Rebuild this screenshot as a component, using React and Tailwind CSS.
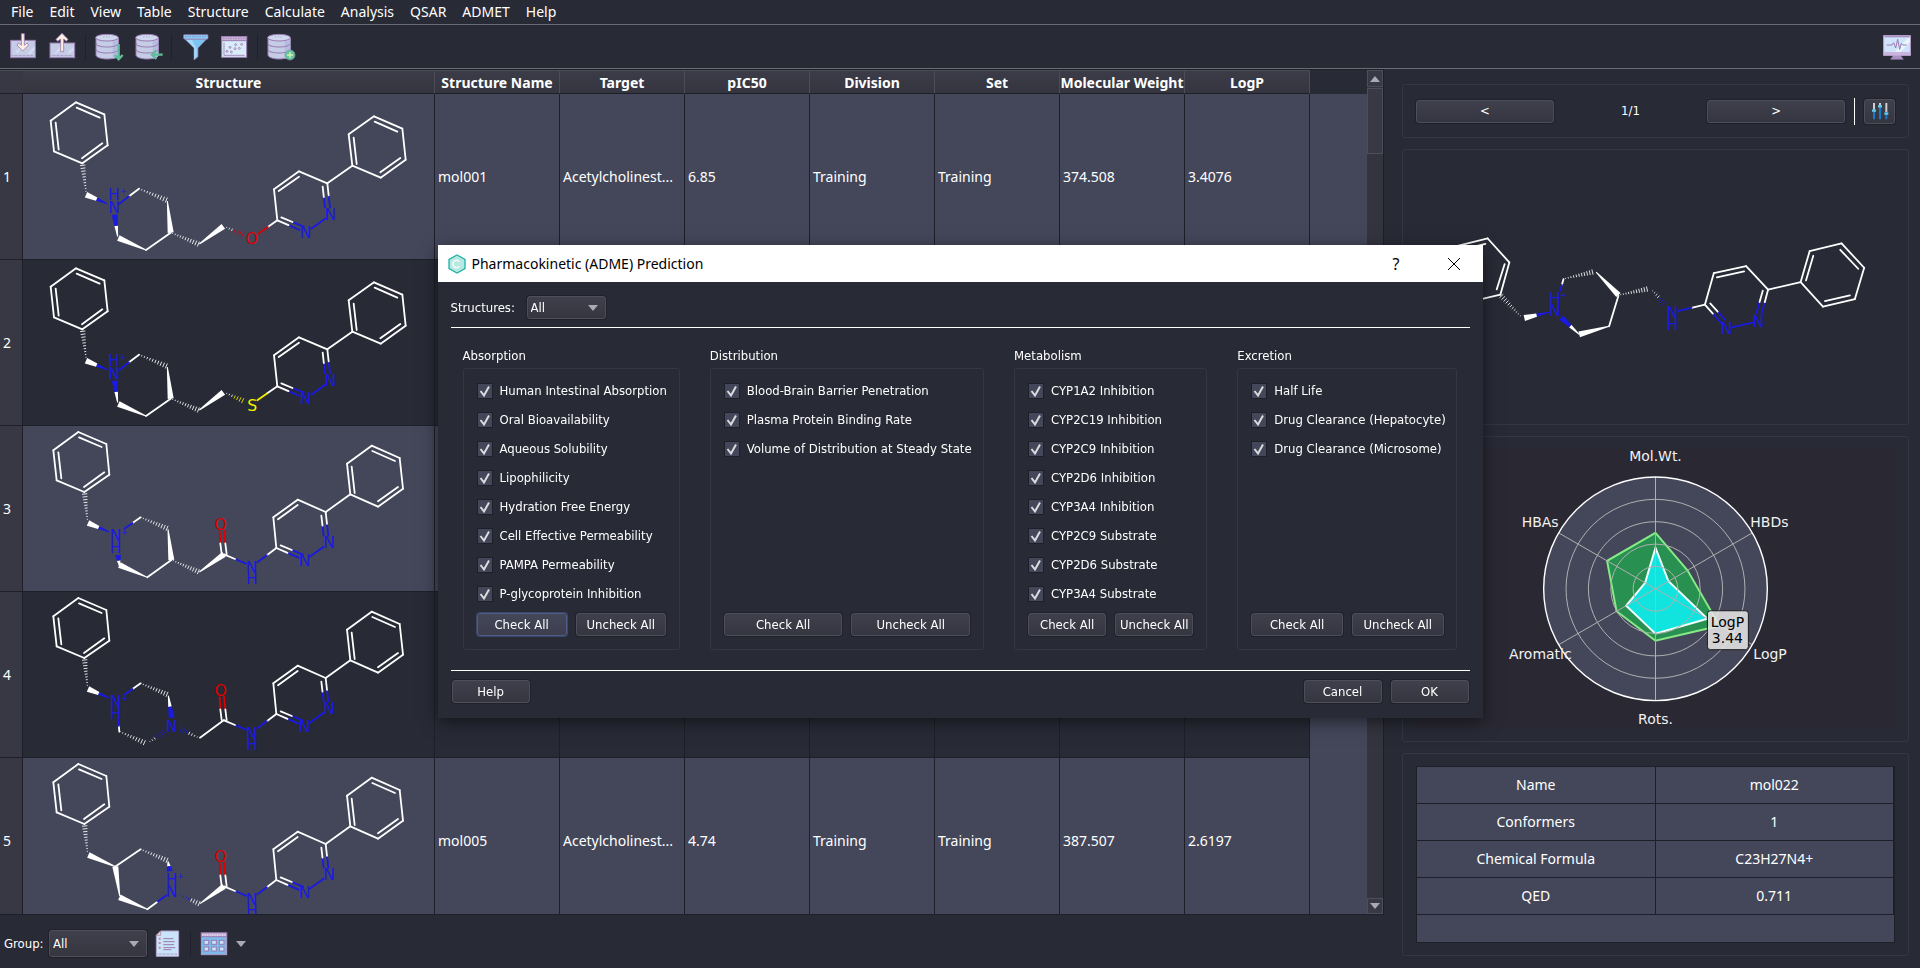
import { useState } from "react";
import clsx from "clsx";

const MENUS = ["File", "Edit", "View", "Table", "Structure", "Calculate", "Analysis", "QSAR", "ADMET", "Help"];

const COLUMNS = ["Structure Name", "Target", "pIC50", "Division", "Set", "Molecular Weight", "LogP"];

const ROWS = [
  ["mol001", "Acetylcholinest...", "6.85", "Training", "Training", "374.508", "3.4076"],
  [],
  [],
  [],
  ["mol005", "Acetylcholinest...", "4.74", "Training", "Training", "387.507", "2.6197"],
];

const DETAILS = [
  ["Name", "mol022"],
  ["Conformers", "1"],
  ["Chemical Formula", "C23H27N4+"],
  ["QED", "0.711"],
];

const GROUPS = [
  {
    title: "Absorption",
    items: [
      "Human Intestinal Absorption",
      "Oral Bioavailability",
      "Aqueous Solubility",
      "Lipophilicity",
      "Hydration Free Energy",
      "Cell Effective Permeability",
      "PAMPA Permeability",
      "P-glycoprotein Inhibition",
    ],
  },
  {
    title: "Distribution",
    items: [
      "Blood-Brain Barrier Penetration",
      "Plasma Protein Binding Rate",
      "Volume of Distribution at Steady State",
    ],
  },
  {
    title: "Metabolism",
    items: [
      "CYP1A2 Inhibition",
      "CYP2C19 Inhibition",
      "CYP2C9 Inhibition",
      "CYP2D6 Inhibition",
      "CYP3A4 Inhibition",
      "CYP2C9 Substrate",
      "CYP2D6 Substrate",
      "CYP3A4 Substrate",
    ],
  },
  {
    title: "Excretion",
    items: ["Half Life", "Drug Clearance (Hepatocyte)", "Drug Clearance (Microsome)"],
  },
];

/* ---------- molecule drawing ---------- */

const W = "#ffffff";
const N = "#1a1ae0";
const O = "#dc0000";
const S = "#f2f200";

// bond: ["l" | "w" | "h", x1, y1, x2, y2, colour, colour2, split]
// wedges and hashes start at their narrow end
function Bond({ bond }) {
  const [kind, x1, y1, x2, y2, c1 = W, c2 = c1, split = 0.5] = bond;
  const at = (t) => [x1 + (x2 - x1) * t, y1 + (y2 - y1) * t];
  const len = Math.hypot(x2 - x1, y2 - y1);
  const nx = -(y2 - y1) / len;
  const ny = (x2 - x1) / len;

  if (kind === "l") {
    const [mx, my] = at(c1 === c2 ? 1 : split);
    return (
      <g strokeWidth="5.4" strokeLinecap="round">
        {c1 !== c2 && <line x1={mx} y1={my} x2={x2} y2={y2} stroke={c2} />}
        <line x1={x1} y1={y1} x2={mx} y2={my} stroke={c1} />
      </g>
    );
  }

  if (kind === "w") {
    const quad = (a, b) => {
      const [ax, ay] = at(a);
      const [bx, by] = at(b);
      const wa = 1.5 + 7.5 * a;
      const wb = 1.5 + 7.5 * b;
      return [
        [ax + nx * wa, ay + ny * wa],
        [bx + nx * wb, by + ny * wb],
        [bx - nx * wb, by - ny * wb],
        [ax - nx * wa, ay - ny * wa],
      ].join(" ");
    };
    if (c1 === c2) return <polygon points={quad(0, 1)} fill={c1} />;
    return (
      <g>
        <polygon points={quad(0, split)} fill={c1} />
        <polygon points={quad(split, 1)} fill={c2} />
      </g>
    );
  }

  const count = Math.max(5, Math.round(len / 8.5));
  return (
    <g strokeWidth="2.6">
      {Array.from({ length: count + 1 }, (_, i) => {
        const t = i / count;
        const [x, y] = at(t);
        const w = 1.5 + 6.5 * t;
        return (
          <line key={i} x1={x + nx * w} y1={y + ny * w} x2={x - nx * w} y2={y - ny * w} stroke={t > split ? c2 : c1} />
        );
      })}
    </g>
  );
}

function Molecule({ bonds, atoms, viewBox, className, label }) {
  return (
    <svg viewBox={viewBox} className={className} role="img" aria-label={label}>
      {bonds.map((bond, i) => (
        <Bond key={i} bond={bond} />
      ))}
      {atoms.map(([text, x, y, fill, size = 47], i) => (
        <text
          key={i}
          x={x}
          y={y + size * 0.36}
          fill={fill}
          fontSize={size}
          textAnchor="middle"
          className="font-['DejaVu_Sans',sans-serif]"
        >
          {text}
        </text>
      ))}
    </svg>
  );
}

const ring = (pts) => pts.map(([x, y], i) => {
  const [nx, ny] = pts[(i + 1) % pts.length];
  return ["l", x, y, nx, ny];
});

const ETHER_BONDS = [
  ...ring([[228, 37], [313, 73], [323, 166], [247, 220], [162, 184], [152, 92]]),
  ["l", 230, 53, 299, 83],
  ["l", 307, 160, 246, 205],
  ["l", 176, 179, 167, 98],
  ["h", 258, 304, 248, 226],
  ["w", 322, 341, 258, 314, N, W],
  ["l", 357, 342, 417, 296, N, W],
  ["h", 417, 296, 499, 330],
  ["w", 502, 333, 512, 428],
  ["l", 512, 428, 438, 480],
  ["w", 438, 480, 355, 444],
  ["w", 353, 440, 344, 374, W, N],
  ["h", 518, 430, 595, 462],
  ["w", 598, 462, 670, 409],
  ["l", 832, 391, 822, 298],
  ["l", 822, 298, 897, 244],
  ["l", 836, 303, 897, 260],
  ["l", 897, 244, 982, 280],
  ["l", 982, 280, 990, 352, W, N],
  ["l", 968, 290, 975, 352, W, N],
  ["l", 832, 391, 899, 420, W, N],
  ["l", 844, 382, 911, 410, W, N],
  ["l", 975, 386, 934, 416, N],
  ["l", 982, 280, 1057, 227],
  ...ring([[1057, 227], [1046, 133], [1122, 79], [1207, 116], [1217, 209], [1142, 263]]),
  ["l", 1070, 222, 1061, 143],
  ["l", 1124, 95, 1192, 125],
  ["l", 1201, 204, 1141, 247],
];

const ETHER_ATOMS = [
  ["N", 342, 352, N],
  ["H", 342, 314, N],
  ["+", 370, 303, N, 26],
  ["N", 991, 374, N],
  ["N", 917, 428, N],
];

const AMIDE_BONDS = [
  ...ring([[235, 36], [319, 72], [328, 164], [253, 216], [170, 181], [160, 91]]),
  ["l", 237, 52, 305, 81],
  ["l", 313, 157, 252, 201],
  ["l", 184, 175, 175, 97],
  ["h", 262, 298, 254, 222],
  ["h", 422, 292, 501, 325],
  ["l", 661, 370, 659, 334, O],
  ["l", 661, 370, 665, 402],
  ["l", 676, 370, 672, 332, O],
  ["l", 676, 370, 680, 402],
  ["l", 672, 403, 738, 431, W, N],
  ["l", 772, 427, 829, 384, N, W],
  ["l", 829, 384, 820, 292],
  ["l", 820, 292, 893, 239],
  ["l", 834, 298, 893, 255],
  ["l", 893, 239, 977, 276],
  ["l", 977, 276, 985, 347, W, N],
  ["l", 964, 287, 971, 347, W, N],
  ["l", 829, 384, 896, 413, W, N],
  ["l", 842, 376, 909, 404, W, N],
  ["l", 971, 380, 929, 410, N],
  ["l", 977, 276, 1051, 223],
  ...ring([[1051, 223], [1041, 131], [1115, 77], [1199, 114], [1209, 206], [1134, 260]]),
  ["l", 1064, 219, 1055, 140],
  ["l", 1117, 93, 1185, 123],
  ["l", 1194, 201, 1134, 244],
];

const AMIDE_ATOMS = [
  ["O", 662, 312, O],
  ["N", 755, 441, N],
  ["H", 756, 476, N],
  ["N", 987, 368, N],
  ["N", 914, 421, N],
];

const MOLECULES = [
  {
    viewBox: "69 12 1233 495",
    bonds: [
      ...ETHER_BONDS,
      ["h", 680, 412, 728, 434, W, O, 0.4],
      ["l", 775, 431, 832, 391, O, W],
    ],
    atoms: [...ETHER_ATOMS, ["O", 756, 446, O]],
  },
  {
    viewBox: "69 12 1233 495",
    bonds: [
      ...ETHER_BONDS,
      ["h", 680, 412, 728, 434, W, S, 0.4],
      ["l", 772, 433, 832, 391, S, W],
    ],
    atoms: [...ETHER_ATOMS, ["S", 757, 447, S]],
  },
  {
    viewBox: "69 18 1233 495",
    bonds: [
      ...AMIDE_BONDS,
      ["w", 328, 336, 264, 309, N, W],
      ["l", 373, 326, 422, 292, N, W],
      ["w", 504, 328, 514, 420],
      ["l", 514, 420, 442, 472],
      ["w", 442, 472, 358, 435],
      ["w", 358, 438, 354, 405, W, N],
      ["h", 520, 422, 595, 455],
      ["w", 598, 456, 672, 403],
    ],
    atoms: [...AMIDE_ATOMS, ["N", 347, 347, N], ["H", 347, 383, N], ["+", 374, 336, N, 26]],
  },
  {
    viewBox: "69 18 1233 495",
    bonds: [
      ...AMIDE_BONDS,
      ["w", 328, 336, 264, 309, N, W],
      ["l", 373, 326, 422, 292, N, W],
      ["w", 505, 329, 515, 395, W, N],
      ["l", 355, 402, 358, 437, N, W],
      ["h", 360, 437, 433, 470],
      ["h", 450, 467, 492, 438, W, N, 0.4],
      ["h", 592, 453, 543, 431, W, N],
      ["l", 600, 455, 672, 402],
    ],
    atoms: [...AMIDE_ATOMS, ["N", 347, 347, N], ["H", 347, 383, N], ["+", 374, 336, N, 26], ["N", 515, 420, N]],
  },
  {
    viewBox: "69 18 1233 495",
    bonds: [
      ...AMIDE_BONDS,
      ["w", 347, 344, 265, 309],
      ["l", 345, 344, 422, 292],
      ["w", 359, 432, 346, 344],
      ["w", 442, 472, 358, 436],
      ["l", 442, 472, 499, 430, W, N],
      ["w", 504, 328, 509, 358, W, N],
      ["h", 543, 430, 597, 455, N, W],
      ["w", 600, 455, 672, 403],
    ],
    atoms: [...AMIDE_ATOMS, ["N", 515, 419, N], ["H", 515, 381, N], ["+", 541, 372, N, 26]],
  },
];

const PREVIEW = {
  bonds: [
    ...ring([[322, 533], [387, 605], [360, 702], [264, 724], [199, 655], [225, 557]]),
    ["l", 315, 549, 238, 568],
    ["l", 373, 610, 349, 686],
    ["h", 420, 766, 363, 706],
    ["w", 506, 755, 432, 772, N, W],
    ["l", 540, 690, 550, 655, N, W],
    ["h", 556, 653, 637, 634],
    ["w", 648, 634, 715, 703],
    ["l", 715, 705, 687, 797],
    ["w", 687, 797, 597, 821],
    ["w", 597, 821, 543, 771, W, N],
    ["h", 722, 702, 801, 685],
    ["h", 818, 690, 852, 727, W, N],
    ["l", 895, 751, 975, 732, N, W],
    ["l", 975, 732, 1002, 637],
    ["l", 1002, 637, 1099, 616],
    ["l", 1011, 650, 1093, 632],
    ["l", 1099, 616, 1165, 687],
    ["l", 975, 732, 1023, 786, W, N],
    ["l", 991, 728, 1036, 778, W, N],
    ["l", 1165, 687, 1145, 762, W, N],
    ["l", 1149, 690, 1130, 758, W, N],
    ["l", 1121, 785, 1056, 800, N],
    ["l", 1165, 687, 1263, 664],
    ...ring([[1263, 664], [1290, 571], [1386, 548], [1454, 621], [1426, 715], [1330, 738]]),
    ["l", 1279, 659, 1301, 585],
    ["l", 1382, 567, 1436, 624],
    ["l", 1411, 704, 1336, 721],
  ],
  atoms: [
    ["N", 524, 750, N],
    ["H", 524, 713, N],
    ["+", 551, 703, N, 26],
    ["N", 877, 754, N],
    ["H", 877, 792, N],
    ["N", 1136, 782, N],
    ["N", 1040, 804, N],
  ],
};

/* ---------- icons ---------- */

const OUTLINE = "#9a7bb0";
const FILL = "#c4cce6";

function Icon({ children }) {
  return (
    <svg viewBox="0 0 90 90" className="size-[30px]" fill="none" strokeWidth="3" stroke={OUTLINE} aria-hidden="true">
      {children}
    </svg>
  );
}

function Cylinder({ x = 0 }) {
  return (
    <g transform={`translate(${x} 0)`}>
      <path d="M6 17v52c0 7 15 12 33 12s34-5 34-12V17" fill={FILL} />
      <path d="M56 28c10-1 17-5 17-10v52c0 5-7 9-17 10z" fill="#b3bce0" stroke="none" />
      <ellipse cx="39" cy="17" rx="34" ry="10" fill="#cfd8ee" />
      <path d="M6 34c0 7 15 11 33 11s34-4 34-11M6 52c0 7 15 11 33 11s34-4 34-11" />
      <path d="M28 15h3M36 14h3M44 15h3M14 40v3M22 42v3M14 58v3M22 60v3" strokeWidth="2" />
    </g>
  );
}

const ImportIcon = () => (
  <Icon>
    <rect x="8" y="25" width="74" height="52" fill={FILL} />
    <path d="M20 62 50 28h10L28 64zM58 66l22-24v10L68 66z" fill="#d5dbf0" stroke="none" />
    <path d="M13 71h64" strokeDasharray="2 2" />
    <path d="M40 5h9v35l8-7 5 6-18 18-17-18 5-6 8 7z" fill="#fdeee2" strokeWidth="2.5" />
  </Icon>
);

const ExportIcon = () => (
  <Icon>
    <rect x="9" y="33" width="74" height="44" fill={FILL} />
    <path d="M22 64 48 36h10L30 64zM60 64l20-20v10L70 64z" fill="#d5dbf0" stroke="none" />
    <path d="M14 71h64" strokeDasharray="2 2" />
    <path d="M41 59h9V21l8 7 5-6L45 4 27 22l5 6 9-7z" fill="#fdeee2" strokeWidth="2.5" />
  </Icon>
);

const DatabaseDownIcon = () => (
  <Icon>
    <Cylinder />
    <path d="M74 36v45M62 69l12 13 12-13" stroke="#5fbd9a" strokeWidth="7" />
  </Icon>
);

const DatabaseLeftIcon = () => (
  <Icon>
    <Cylinder x={3} />
    <path d="M89 68H58M70 55 57 68l13 13" stroke="#5fbd9a" strokeWidth="7" />
  </Icon>
);

const FunnelIcon = () => (
  <Icon>
    <path d="M14 21h66L54 48v26l-12 10V48z" fill="#7cc4f2" strokeWidth="2" />
    <path d="M20 24h16l14 26v24l-7 8V48z" fill="#a4dbfa" stroke="none" />
    <rect x="11" y="8" width="73" height="13" rx="2" fill="#8fc9f4" strokeWidth="2" />
    <path d="M16 14h62" stroke="#6f8fd0" strokeDasharray="2 3" strokeWidth="4" />
  </Icon>
);

const ScatterIcon = () => (
  <Icon>
    <rect x="8" y="14" width="75" height="62" fill="#d9ecfa" />
    <rect x="8" y="14" width="75" height="12" fill="#cdb6dc" />
    <path d="M12 20h68" strokeDasharray="2 3" strokeWidth="4" />
    <path d="M15 32v38h62" strokeWidth="2.5" />
    <g strokeWidth="2.5">
      <circle cx="24" cy="58" r="3" />
      <circle cx="33" cy="46" r="3" />
      <circle cx="37" cy="60" r="3" />
      <circle cx="48" cy="50" r="3" />
      <circle cx="50" cy="38" r="3" />
      <circle cx="61" cy="49" r="3" />
      <circle cx="68" cy="37" r="3" />
    </g>
  </Icon>
);

const DatabaseAddIcon = () => (
  <Icon>
    <Cylinder />
    <circle cx="72" cy="69" r="15" fill="#62c3a0" stroke="#8d8fae" strokeWidth="2" />
    <path d="M72 60v18M63 69h18" stroke="#d6f5a8" strokeWidth="4" />
  </Icon>
);

const MonitorIcon = () => (
  <Icon>
    <path d="M36 68h18l10 14H26z" fill="#a893c4" strokeWidth="2" />
    <rect x="5" y="11" width="80" height="59" fill="#cfe4fa" stroke="#c3a5d6" />
    <path d="M38 60 78 18h6v12L56 60z" fill="#e8f4fe" stroke="none" />
    <rect x="5" y="60" width="80" height="9" fill="#c9b3df" stroke="none" />
    <path d="M7 14h76" stroke="#a78fc0" strokeWidth="4" />
    <path d="M14 39h16l5-7 6 16 6-26 6 30 5-18 4 5h12" />
  </Icon>
);

const ReportIcon = () => (
  <Icon>
    <path d="M26 6h54v76H13V19z" fill="#c9e4f8" stroke="#b5a2cc" />
    <path d="M26 6v13H13z" fill="#f7d9a0" strokeWidth="2" />
    <g strokeWidth="3">
      <path d="M34 29h30M34 38h34M34 47h32M34 56h36M34 62h24" />
      <path d="M20 29h6M20 42h6M20 56h6" stroke="#c58a9c" strokeWidth="6" />
    </g>
    <path d="M17 75h60" strokeDasharray="2 2" />
  </Icon>
);

const GridIcon = () => (
  <Icon>
    <rect x="7" y="12" width="76" height="65" fill="#7db9ea" stroke="#b09cca" />
    <rect x="7" y="12" width="76" height="11" fill="#e2d3ec" />
    <path d="M12 18h68" strokeDasharray="2 3" strokeWidth="3" />
    <g fill="#c9e4fa">
      <rect x="15" y="34" width="14" height="12" />
      <rect x="38" y="34" width="14" height="12" />
      <rect x="61" y="34" width="14" height="12" />
      <rect x="15" y="54" width="14" height="12" />
      <rect x="38" y="54" width="14" height="12" />
      <rect x="61" y="54" width="14" height="12" />
    </g>
  </Icon>
);

const SlidersIcon = () => (
  <svg viewBox="0 0 54 54" className="size-[18px]" strokeWidth="6" aria-hidden="true">
    <path d="M9 3v20M27 3v8M46 3v28" stroke="#cfcfd2" />
    <path d="M9 23v29M27 11v41M46 31v21" stroke="#1c7ac4" />
    <path d="M3 26h12M21 13h12M40 35h12" stroke="#62cbe9" strokeWidth="7" />
  </svg>
);

const LogoIcon = () => (
  <svg viewBox="0 0 60 60" className="size-5" aria-hidden="true">
    <polygon points="30,3 54,16 54,44 30,57 6,44 6,16" fill="#b8e8e2" stroke="#22b3a6" strokeWidth="4" />
    <path d="M37 23a11 11 0 1 0 0 14" fill="none" stroke="#f2fffd" strokeWidth="4" />
  </svg>
);

function Triangle({ className, up }) {
  return (
    <svg viewBox="0 0 10 6" className={clsx("h-[6px] w-[10px] fill-[#a9aab2]", className)} aria-hidden="true">
      <path d={up ? "M0 6 5 0l5 6z" : "M0 0h10L5 6z"} />
    </svg>
  );
}

/* ---------- controls ---------- */

function Button({ children, className, focused, ...props }) {
  return (
    <button
      type="button"
      className={clsx(
        "flex items-center justify-center rounded-[3px] border bg-linear-to-b text-[13px] whitespace-nowrap text-white ring-1",
        focused
          ? "border-[#4f5c8a] from-[#444759] to-[#3c3e4e] ring-[#3c4668]"
          : "border-[#4d4e5a] from-[#3f404c] to-[#353640] ring-[#20212b]",
        className
      )}
      {...props}
    >
      {children}
    </button>
  );
}

function Select({ id, className }) {
  return (
    <div className={clsx("relative", className)}>
      <select
        id={id}
        className="h-full w-full appearance-none rounded-[3px] border border-[#4d4e5a] bg-linear-to-b from-[#3f404c] to-[#353640] pl-[3px] text-[13px] text-white ring-1 ring-[#20212b]"
      >
        <option>All</option>
      </select>
      <Triangle className="pointer-events-none absolute top-1/2 right-2 -translate-y-1/2" />
    </div>
  );
}

function Separator() {
  return <div className="-mx-px h-[26px] w-px bg-[#20212b]" />;
}

function Panel({ children, className }) {
  return <section className={clsx("rounded-[3px] border border-[#353642] px-[13px] py-3", className)}>{children}</section>;
}

/* ---------- radar chart ---------- */

function radar(values) {
  return values
    .map((r, i) => {
      const a = (Math.PI / 3) * i;
      return `${(239 + r * Math.sin(a)).toFixed(1)},${(140 - r * Math.cos(a)).toFixed(1)}`;
    })
    .join(" ");
}

function RadarChart() {
  return (
    <svg
      viewBox="0 0 478 280"
      className="h-full w-full bg-[#2a2833] font-['DejaVu_Sans',sans-serif] text-sm"
      role="img"
      aria-label="Property radar"
    >
      <circle cx="239" cy="140" r="112" fill="#44475a" />
      <polygon points={radar([56, 37, 74, 52, 45, 56])} fill="#289050" stroke="#86ea86" strokeWidth="2" />
      <polygon points={radar([41, 15, 60, 45, 34, 12])} fill="#11e4de" stroke="#f2ffff" strokeWidth="2" />
      <g fill="none" stroke="#b0b0b0">
        {[22.4, 44.8, 67.2, 89.6].map((r) => (
          <circle key={r} cx="239" cy="140" r={r} />
        ))}
        <path d="M239 28v224M142 84l194 112M142 196 336 84" />
      </g>
      <circle cx="239" cy="140" r="112" fill="none" stroke="#ffffff" strokeWidth="1.4" />
      <g fill="#f2f2f2">
        <text x="239" y="12" textAnchor="middle">Mol.Wt.</text>
        <text x="142" y="78" textAnchor="end">HBAs</text>
        <text x="334" y="78">HBDs</text>
        <text x="337" y="210">LogP</text>
        <text x="155" y="210" textAnchor="end">Aromatic</text>
        <text x="239" y="275" textAnchor="middle">Rots.</text>
      </g>
      <rect x="291" y="162" width="41" height="39" rx="3" fill="#e6e6e6" fillOpacity="0.88" stroke="#1c1c1c" />
      <g fill="#000000" textAnchor="middle">
        <text x="311" y="178">LogP</text>
        <text x="311" y="194">3.44</text>
      </g>
    </svg>
  );
}

/* ---------- page parts ---------- */

function Toolbar() {
  const iconButton = (label, icon) => (
    <button type="button" aria-label={label}>
      {icon}
    </button>
  );
  return (
    <div className="flex h-11 shrink-0 items-center gap-[9px] border-b border-[#6a6b73] px-2">
      {iconButton("Import", <ImportIcon />)}
      {iconButton("Export", <ExportIcon />)}
      <Separator />
      {iconButton("Save to database", <DatabaseDownIcon />)}
      {iconButton("Load from database", <DatabaseLeftIcon />)}
      <Separator />
      {iconButton("Filter", <FunnelIcon />)}
      {iconButton("Plot", <ScatterIcon />)}
      <Separator />
      {iconButton("Add database", <DatabaseAddIcon />)}
      <div className="ml-auto flex">{iconButton("Monitor", <MonitorIcon />)}</div>
    </div>
  );
}

function MoleculeTable() {
  return (
    <div className="flex min-h-0 flex-1 border-y border-[#1e1f29]">
      <div className="min-w-0 flex-1 overflow-hidden bg-[#44475a]">
        <div className="h-6 bg-[#282a36]">
          <table className="table-fixed border-separate border-spacing-0 text-sm">
            <colgroup>
              <col className="w-[23px]" />
              <col className="w-[412px]" />
              {COLUMNS.map((c) => (
                <col key={c} className="w-[125px]" />
              ))}
            </colgroup>
            <thead>
              <tr className="h-6">
                <td className="border-t border-b border-t-[#4b4c57] border-b-[#1e1f29] bg-[#373843]" />
                {["Structure", ...COLUMNS].map((c) => (
                  <th
                    key={c}
                    className="overflow-hidden border-t border-r border-b border-t-[#4b4c57] border-r-[#4b4c57] border-b-[#1e1f29] bg-linear-to-b from-[#3b3c47] to-[#34353f] p-0 pt-px leading-5 font-bold whitespace-nowrap"
                  >
                    {c}
                  </th>
                ))}
              </tr>
            </thead>
            <tbody>
              {ROWS.map((row, i) => (
                <tr key={i} className={clsx("h-[166px]", i % 2 ? "bg-[#282a36]" : "bg-[#44475a]")}>
                  <th className="border-r border-b border-[#1e1f29] bg-[#373843] p-0 pl-[3px] text-left font-normal">
                    {i + 1}
                  </th>
                  <td className="border-r border-b border-[#1e1f29] p-0">
                    <Molecule {...MOLECULES[i]} className="block h-[165px] w-full" label="Structure" />
                  </td>
                  {COLUMNS.map((c, j) => (
                    <td key={c} className="border-r border-b border-[#1e1f29] p-0 pl-[3px] whitespace-nowrap">
                      {row[j]}
                    </td>
                  ))}
                </tr>
              ))}
            </tbody>
          </table>
        </div>
      </div>
      <div className="flex w-[17px] flex-col border-r border-[#1e1f29] bg-[#33343e]">
        <div className="flex h-[17px] items-center justify-center border border-[#4d4e5a] bg-[#383944]">
          <Triangle up />
        </div>
        <div className="mt-px h-[66px] border border-[#4d4e5a] bg-[#383944]" />
        <div className="mt-auto flex h-4 items-center justify-center border border-[#4d4e5a] bg-[#383944]">
          <Triangle />
        </div>
      </div>
    </div>
  );
}

function Sidebar() {
  return (
    <aside className="flex w-[536px] shrink-0 flex-col gap-[11px] pt-[15px] pr-[11px] pb-3 pl-[18px]">
      <Panel className="flex h-[54px] items-center gap-[9px]">
        <Button className="h-[23px] flex-1">&lt;</Button>
        <span className="flex-1 text-center">1/1</span>
        <Button className="h-[23px] flex-1">&gt;</Button>
        <div className="h-[27px] w-px bg-white" />
        <Button className="h-[25px] w-[31px]" aria-label="Display settings">
          <SlidersIcon />
        </Button>
      </Panel>
      <Panel className="min-h-0 flex-[275]">
        <Molecule {...PREVIEW} viewBox="108 303 1437 753" className="h-full w-full" label="mol022" />
      </Panel>
      <Panel className="min-h-0 flex-[307]">
        <RadarChart />
      </Panel>
      <Panel className="font-['Noto_Sans',sans-serif]">
        <div className="border border-[#1e1f29] bg-[#44475a] pb-[27px]">
          <table className="w-full table-fixed border-separate border-spacing-0 text-center text-sm">
            <tbody>
              {DETAILS.map(([name, value]) => (
                <tr key={name} className="h-[37px]">
                  <td className="border-r border-b border-[#1e1f29] p-0">{name}</td>
                  <td className="border-r border-b border-[#1e1f29] p-0">{value}</td>
                </tr>
              ))}
            </tbody>
          </table>
        </div>
      </Panel>
    </aside>
  );
}

function CheckGroup({ title, items, focused }) {
  const [checked, setChecked] = useState(() => items.map(() => true));
  const setAll = (value) => setChecked(items.map(() => value));

  return (
    <fieldset className="flex min-w-0 flex-col">
      <legend className="mb-1 h-4 leading-4">{title}</legend>
      <div className="flex flex-1 flex-col rounded-[3px] border border-[#353642] px-[13px] pt-[7px] pb-[13px]">
        {items.map((item, i) => (
          <label key={item} className="flex h-[29px] items-center gap-[7px] whitespace-nowrap">
            <span className="relative size-4 shrink-0">
              <input
                type="checkbox"
                checked={checked[i]}
                onChange={() => setChecked(checked.map((c, j) => (j === i ? !c : c)))}
                className="block size-4 appearance-none border border-[#1e1f29] bg-[#44475a]"
              />
              {checked[i] && (
                <svg viewBox="0 0 16 16" className="pointer-events-none absolute inset-0" aria-hidden="true">
                  <path d="M3.5 8 7 12.5 12 3.5" fill="none" stroke="#dcdce0" strokeWidth="2" />
                </svg>
              )}
            </span>
            {item}
          </label>
        ))}
        <div className="mt-auto flex gap-[9px] pt-[5px]">
          <Button className="h-[23px] flex-1" focused={focused} onClick={() => setAll(true)}>
            Check All
          </Button>
          <Button className="h-[23px] flex-1" onClick={() => setAll(false)}>
            Uncheck All
          </Button>
        </div>
      </div>
    </fieldset>
  );
}

function PredictionDialog() {
  return (
    <div className="fixed inset-0 flex items-center justify-center pb-[5px]">
      <div
        role="dialog"
        aria-label="Pharmacokinetic (ADME) Prediction"
        className="w-[1045px] bg-[#282a36] shadow-[0_4px_16px_rgba(0,0,0,0.5)]"
      >
        <header className="flex h-[37px] items-center bg-white pl-[9px] font-['Noto_Sans',sans-serif] text-sm text-black">
          <LogoIcon />
          <h1 className="ml-[5px]">Pharmacokinetic (ADME) Prediction</h1>
          <button type="button" aria-label="Help" className="ml-auto w-[57px] text-base">
            ?
          </button>
          <button type="button" aria-label="Close" className="flex w-[58px] justify-center">
            <svg viewBox="0 0 12 12" className="size-3" fill="none" stroke="#000000" aria-hidden="true">
              <path d="M0 0 12 12M12 0 0 12" />
            </svg>
          </button>
        </header>
        <div className="px-[13px] pt-[14px] pb-[15px]">
          <div className="flex items-center">
            <label htmlFor="structures" className="w-[76px]">
              Structures:
            </label>
            <Select id="structures" className="h-[23px] w-[79px]" />
          </div>
          <div className="mt-2 grid grid-cols-[217fr_274fr_193fr_220fr] gap-[30px] border-y border-white px-3 py-5">
            {GROUPS.map((group, i) => (
              <CheckGroup key={group.title} {...group} focused={i === 0} />
            ))}
          </div>
          <footer className="mt-[9px] flex gap-[9px] px-px">
            <Button className="mr-auto h-[23px] w-[78px]">Help</Button>
            <Button className="h-[23px] w-[78px]">Cancel</Button>
            <Button className="h-[23px] w-[78px]">OK</Button>
          </footer>
        </div>
      </div>
    </div>
  );
}

export default function App() {
  return (
    <div className="flex h-screen flex-col overflow-hidden bg-[#282a36] font-['DejaVu_Sans_Condensed','Noto_Sans',sans-serif] text-[13px] text-white">
      <nav className="flex h-[25px] shrink-0 items-center gap-4 border-b border-[#6a6b73] px-[11px] font-['Noto_Sans',sans-serif] text-sm">
        {MENUS.map((m) => (
          <a key={m} href="#">
            {m}
          </a>
        ))}
      </nav>
      <Toolbar />
      <div className="flex min-h-0 flex-1">
        <main className="flex min-w-0 flex-1 flex-col font-['Noto_Sans',sans-serif]">
          <MoleculeTable />
          <div className="flex h-[53px] shrink-0 items-center gap-[5px] px-1 pt-1 font-['DejaVu_Sans_Condensed','Noto_Sans',sans-serif]">
            <label htmlFor="group" className="w-10">
              Group:
            </label>
            <Select id="group" className="h-[27px] w-[98px]" />
            <div className="flex items-center gap-[9px]">
              <button type="button" aria-label="Report">
                <ReportIcon />
              </button>
              <Separator />
              <button type="button" aria-label="Table view" className="flex items-center gap-[7px]">
                <GridIcon />
                <Triangle />
              </button>
            </div>
          </div>
        </main>
        <Sidebar />
      </div>
      <PredictionDialog />
    </div>
  );
}
